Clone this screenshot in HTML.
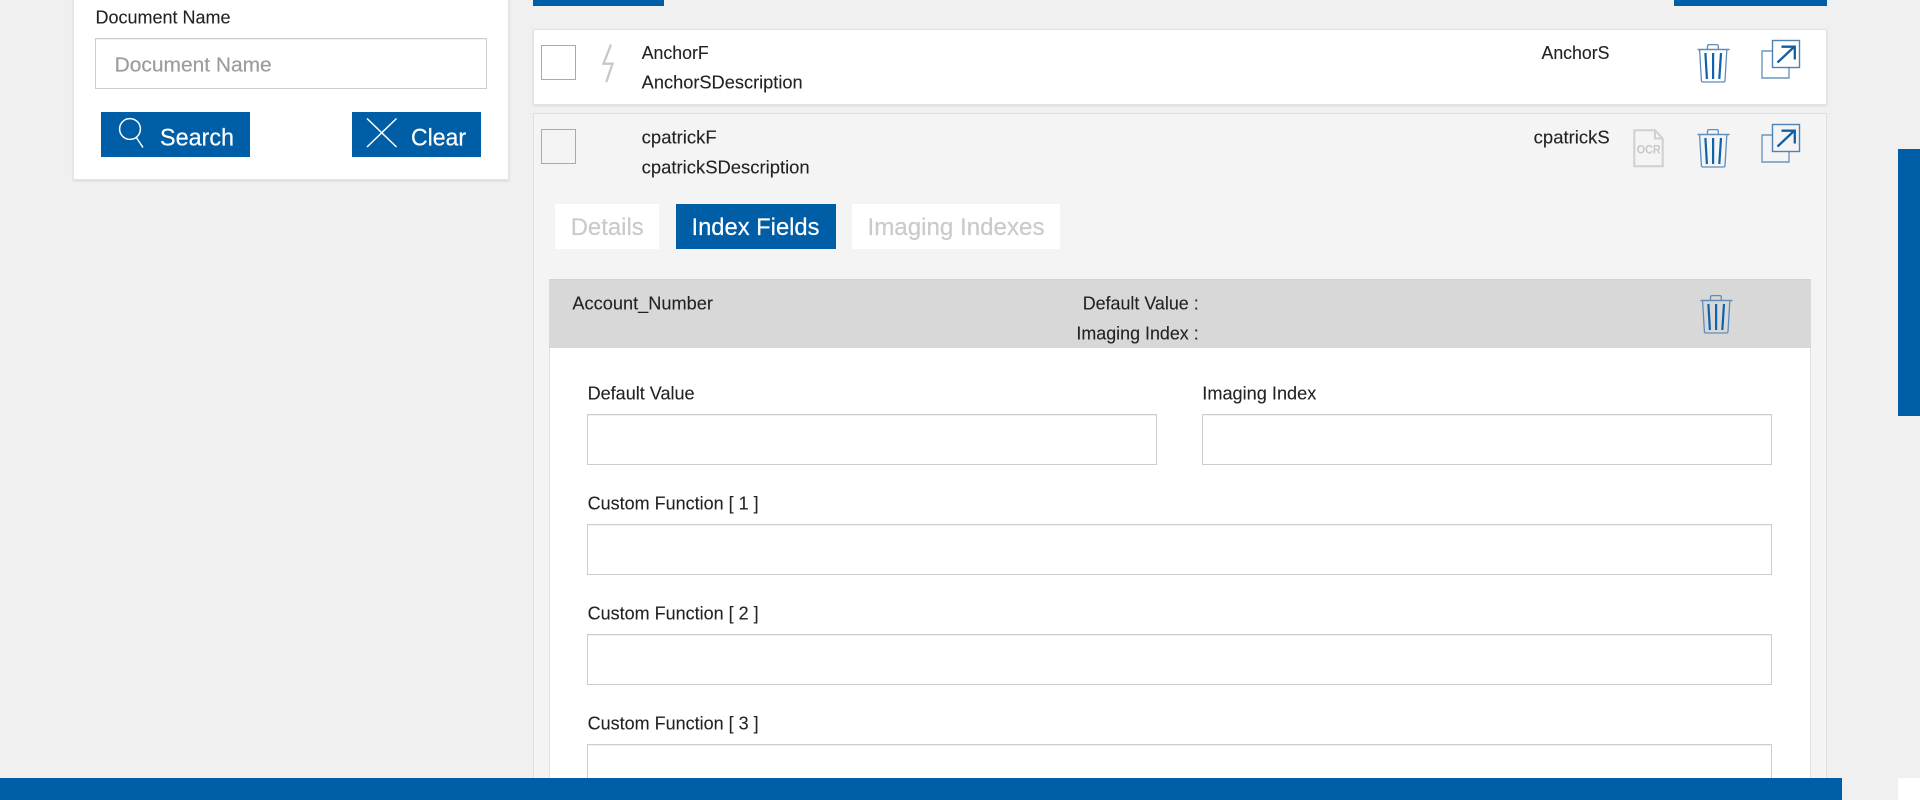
<!DOCTYPE html>
<html lang="en"><head><meta charset="utf-8"><title>Documents</title>
<style>
html,body{margin:0;padding:0;width:1920px;height:800px;overflow:hidden;background:#f0f0f0;font-family:"Liberation Sans",sans-serif}
#p{position:absolute;left:0;top:0;width:1920px;height:800px;overflow:hidden;background:#f0f0f0}
.b{position:absolute;box-sizing:border-box}
.blue{background:#005ea6}
.inp{background:#fff;border:1.5px solid #cdcdcd;box-shadow:inset 0 1px 0 #f2f2f2}
svg{position:absolute;left:0;top:0}
text{font-family:"Liberation Sans",sans-serif}
.t18{font-size:18px;fill:#222;stroke:#222;stroke-width:.1px}
.t24{font-size:24px}
</style></head><body>
<div id="p">
<div class="b" style="left:72.5px;top:-10px;width:436.5px;height:189.5px;background:#fff;border:1px solid #e6e6e6;box-shadow:0 1px 2px rgba(0,0,0,.12)"></div>
<div class="b inp" style="left:95px;top:38px;width:392px;height:51px"></div>
<div class="b blue" style="left:101px;top:112px;width:149px;height:45px"></div>
<div class="b blue" style="left:352px;top:112px;width:129px;height:45px"></div>
<div class="b blue" style="left:533px;top:0;width:131px;height:6px"></div>
<div class="b blue" style="left:1674px;top:0;width:153px;height:6px"></div>
<div class="b" style="left:533px;top:29px;width:1294px;height:76px;background:#fff;border:1px solid #e2e2e2;box-shadow:0 1px 2px rgba(0,0,0,.1)"></div>
<div class="b" style="left:533px;top:113px;width:1294px;height:687px;background:#f4f4f4;border:1px solid #e0e0e0"></div>
<div class="b" style="left:541px;top:45px;width:35px;height:35px;background:#fff;border:1.3px solid #aaa"></div>
<div class="b" style="left:541px;top:129px;width:35px;height:35px;background:#f4f4f4;border:1.3px solid #aaa"></div>
<div class="b" style="left:555px;top:204px;width:104px;height:45px;background:#fff"></div>
<div class="b blue" style="left:676px;top:204px;width:160px;height:45px"></div>
<div class="b" style="left:852px;top:204px;width:208px;height:45px;background:#fff"></div>
<div class="b" style="left:549px;top:279px;width:1262px;height:69px;background:#d8d8d8;border-top:1px solid #d2d2d2"></div>
<div class="b" style="left:549px;top:348px;width:1262px;height:452px;background:#fff;border-right:1px solid #e0e0e0;border-left:1px solid #e0e0e0"></div>
<div class="b inp" style="left:587px;top:414px;width:570px;height:51px"></div>
<div class="b inp" style="left:1202px;top:414px;width:570px;height:51px"></div>
<div class="b inp" style="left:587px;top:524px;width:1185px;height:51px"></div>
<div class="b inp" style="left:587px;top:634px;width:1185px;height:51px"></div>
<div class="b inp" style="left:587px;top:744px;width:1185px;height:51px"></div>
<div class="b" style="left:1898px;top:149px;width:22px;height:267px;background:#005ea6"></div>
<svg width="1920" height="800" viewBox="0 0 1920 800" xmlns="http://www.w3.org/2000/svg">
<defs>
<g id="trash" fill="none">
<path d="M0.5 5.5H32.5" stroke="#5f8dba" stroke-width="1.4"/>
<path d="M10.5 5V2.2Q10.5 .6 12 .6H19.8Q21.3 .6 21.3 2.2V5" stroke="#5f8dba" stroke-width="1.3"/>
<path d="M2.6 6L4.4 36.6Q4.5 38 6 38H26.4Q27.9 38 28 36.6L29.8 6" stroke="#5f8dba" stroke-width="1.3"/>
<path d="M8.4 9L9.9 35M16.1 9V35M24 9L22.3 35" stroke="#0f62a8" stroke-width="2.2"/>
</g>
<g id="ext" fill="none">
<path d="M11 11H1V38H28V28" stroke="#6d96bf" stroke-width="1.4"/>
<rect x="11.5" y=".5" width="27" height="27" stroke="#4e82b4" stroke-width="1.4"/>
<path d="M16.5 22.5L33.5 6.5M20.5 6.7H33.8V19.5" stroke="#0f5fa6" stroke-width="2.3"/>
</g>
</defs>
<text class="t18" x="95.5" y="23.7" textLength="135" lengthAdjust="spacingAndGlyphs">Document Name</text>
<text x="114.7" y="71.5" font-size="20" fill="#9c9c9c" stroke="#9c9c9c" stroke-width=".2" textLength="157" lengthAdjust="spacingAndGlyphs">Document Name</text>
<g fill="none" stroke="#fff" stroke-width="1.5">
<circle cx="130" cy="129" r="10.4"/><path d="M136 137L143 147.5"/>
<path d="M367 118.5L396.5 147M396.5 118.5L367 147"/>
</g>
<text class="t24" fill="#fff" stroke="#fff" stroke-width=".2" x="160" y="145.7" textLength="74" lengthAdjust="spacingAndGlyphs">Search</text>
<text class="t24" fill="#fff" stroke="#fff" stroke-width=".2" x="411" y="145.7" textLength="55" lengthAdjust="spacingAndGlyphs">Clear</text>
<path d="M611 44.5L603.5 63.7H612.5L606.3 82" fill="none" stroke="#c8c8c8" stroke-width="2.3"/>
<text class="t18" x="641.7" y="59" textLength="67" lengthAdjust="spacingAndGlyphs">AnchorF</text>
<text class="t18" x="641.7" y="88.5" textLength="161" lengthAdjust="spacingAndGlyphs">AnchorSDescription</text>
<text class="t18" x="1541.5" y="59" textLength="68" lengthAdjust="spacingAndGlyphs">AnchorS</text>
<text class="t18" x="641.7" y="143.5" textLength="75" lengthAdjust="spacingAndGlyphs">cpatrickF</text>
<text class="t18" x="641.7" y="173.5" textLength="168" lengthAdjust="spacingAndGlyphs">cpatrickSDescription</text>
<text class="t18" x="1533.7" y="143.5" textLength="76" lengthAdjust="spacingAndGlyphs">cpatrickS</text>
<path d="M1634.3 130.3H1655L1662.7 138.5V166.3H1634.3Z M1655 130.3V138.5H1662.7" fill="none" stroke="#d0d0d0" stroke-width="2"/>
<text x="1636.7" y="153.7" font-size="12" font-weight="bold" fill="#c8c8c8" textLength="24" lengthAdjust="spacingAndGlyphs">OCR</text>
<use href="#trash" x="1697" y="44"/>
<use href="#trash" x="1697" y="129"/>
<use href="#ext" x="1761" y="40"/>
<use href="#ext" x="1761" y="124"/>
<use href="#trash" x="1700" y="295"/>
<text class="t24" fill="#cacaca" stroke="#cacaca" stroke-width=".2" x="570.7" y="235" textLength="73" lengthAdjust="spacingAndGlyphs">Details</text>
<text class="t24" fill="#fff" stroke="#fff" stroke-width=".2" x="691.5" y="235" textLength="128" lengthAdjust="spacingAndGlyphs">Index Fields</text>
<text class="t24" fill="#cacaca" stroke="#cacaca" stroke-width=".2" x="867.5" y="235" textLength="177" lengthAdjust="spacingAndGlyphs">Imaging Indexes</text>
<text class="t18" x="572.4" y="309.3" textLength="140.6" lengthAdjust="spacingAndGlyphs">Account_Number</text>
<text class="t18" x="1082.7" y="309.3" textLength="116" lengthAdjust="spacingAndGlyphs">Default Value :</text>
<text class="t18" x="1076.4" y="339.5" textLength="122.3" lengthAdjust="spacingAndGlyphs">Imaging Index :</text>
<text class="t18" x="587.6" y="399.3" textLength="107" lengthAdjust="spacingAndGlyphs">Default Value</text>
<text class="t18" x="1202.3" y="399.3" textLength="114" lengthAdjust="spacingAndGlyphs">Imaging Index</text>
<text class="t18" x="587.6" y="509.3" textLength="171" lengthAdjust="spacingAndGlyphs">Custom Function [ 1 ]</text>
<text class="t18" x="587.6" y="619.3" textLength="171" lengthAdjust="spacingAndGlyphs">Custom Function [ 2 ]</text>
<text class="t18" x="587.6" y="729.3" textLength="171" lengthAdjust="spacingAndGlyphs">Custom Function [ 3 ]</text>
</svg>
<div class="b blue" style="left:0;top:778px;width:1842px;height:22px"></div>
<div class="b" style="left:1898px;top:778px;width:22px;height:22px;background:#fff"></div>
</div>
</body></html>
